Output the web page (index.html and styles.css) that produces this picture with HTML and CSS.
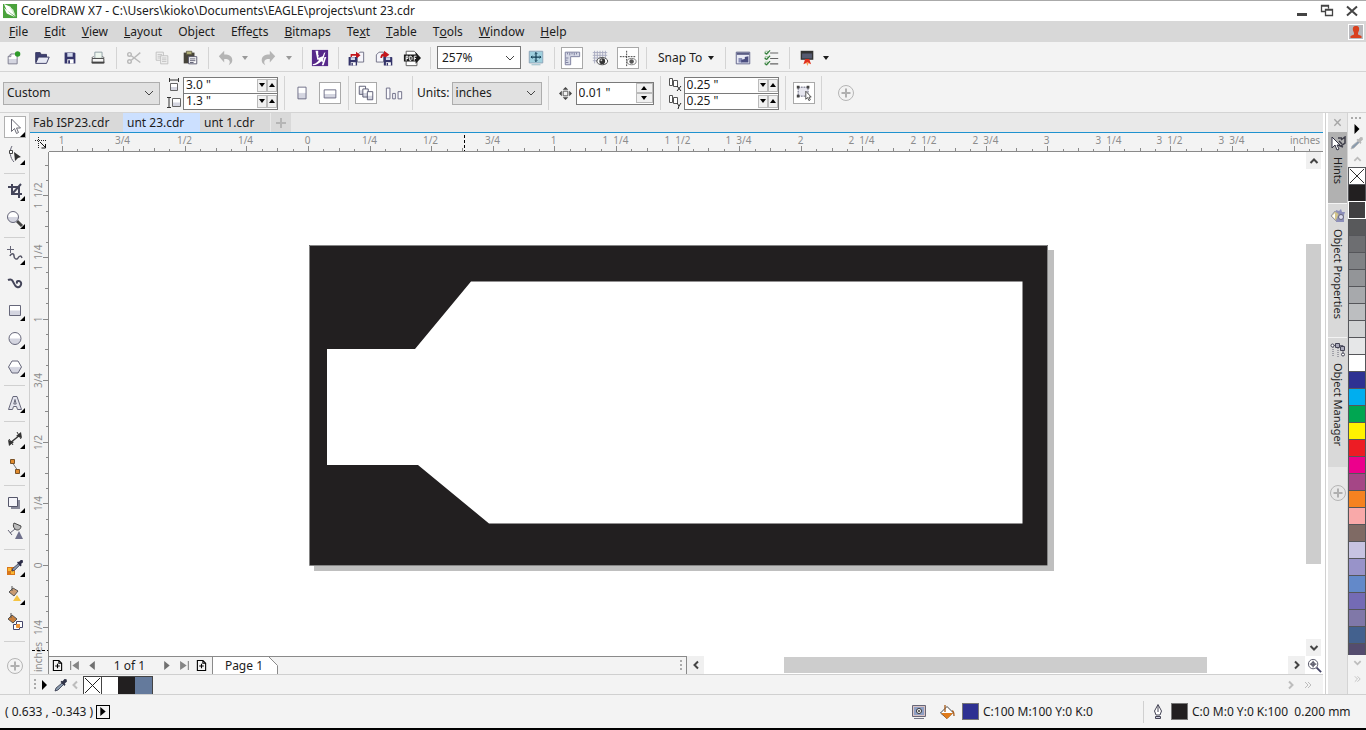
FILE: index.html
```html
<!DOCTYPE html>
<html lang="en">
<head>
<meta charset="utf-8">
<title>CorelDRAW X7 - C:\Users\kioko\Documents\EAGLE\projects\unt 23.cdr</title>
<link rel="stylesheet" href="styles.css">
</head>
<body>
<svg class="defs" aria-hidden="true">
  <defs>
    <linearGradient id="shade" x1="0" y1="0" x2="0" y2="1"><stop offset=".45" stop-color="#fff"/><stop offset=".55" stop-color="#d4d5e0"/></linearGradient>
    <symbol id="fly" viewBox="0 0 22 22"><path d="M21 16v5h-5z" fill="#000"/></symbol>
    <symbol id="chev" viewBox="0 0 10 10"><path d="M1 3l4 4 4-4" fill="none" stroke="currentColor"/></symbol>
    <symbol id="chev-bold" viewBox="0 0 10 10"><path d="M1.500 3l3.500 3.500L8.500 3" fill="none" stroke="currentColor" stroke-width="2"/></symbol>
    <symbol id="dblchev" viewBox="0 0 10 10"><path d="M2 2l3 3-3 3M5 2l3 3-3 3" fill="none" stroke="currentColor"/></symbol>
    <symbol id="down" viewBox="0 0 6 6"><path d="M0 1h6L3 5z" fill="currentColor"/></symbol>
    <symbol id="up" viewBox="0 0 6 6"><path d="M0 5h6L3 1z" fill="currentColor"/></symbol>
    <symbol id="plus-ring" viewBox="0 0 18 18"><circle cx="9" cy="9" r="7.500" fill="none" stroke="#b5b5b5"/><path d="M9 4.500v9M4.500 9h9" stroke="#b0b0b0" stroke-width="2"/></symbol>
    <symbol id="dropper" viewBox="0 0 14 14"><path d="M1 13l1-3 6-5 1.500 1.500L4 12z" fill="#8a9bad" stroke="currentColor" stroke-width=".8"/><path d="M6.500 4l4 4 1-1.500L10.800 5.500 13 3.500 12.500 1.200 10.500 1 8.500 3.300 7.500 2.800z" fill="currentColor"/></symbol>
    <symbol id="none" viewBox="0 0 17 17"><path d="M0 0h17v17H0z" fill="#fff"/><path d="M1 1l15 15M16 1L1 16" stroke="#222"/></symbol>
    <symbol id="addpage" viewBox="0 0 12 12"><path d="M1.500 .500h6l3 3v8h-9zM7.500 .500v3h3M6 4v5M3.500 6.500h5" fill="none" stroke="#000" stroke-width="1.200"/></symbol>
    <symbol id="disk" viewBox="0 0 14 14"><path d="M1 1h11l1 1v11H1z" fill="#34346a"/><path d="M4 1.500h6v4H4z" fill="#cfd6ea"/><path d="M4 8.500h7V13H4z" fill="#fff"/><path d="M5 9.500h2V13H5z" fill="#34346a"/></symbol>
  </defs>
</svg>
<div class="app">
  <header class="titlebar">
    <svg class="logo" viewBox="0 0 16 16"><path d="M0 0h15v15H0z" fill="#4aa23c"/><path d="M1 0l7 3 5 10L4 7z" fill="#fff"/><path d="M6 2l5 4 3 8z" fill="#d5eed0"/><path d="M1 4l7 6 5 4-9-4z" fill="#fff"/></svg>
    <h1 class="title">CorelDRAW X7 - C:\Users\kioko\Documents\EAGLE\projects\unt 23.cdr</h1>
    <button class="winbtn" aria-label="Minimize"><svg viewBox="0 0 14 14"><path d="M2 9h10v3H2z" fill="#444"/></svg></button>
    <button class="winbtn" aria-label="Restore"><svg viewBox="0 0 14 14"><path d="M5 7.500H1.500v-6h7v3M5.500 5.500h7v6h-7zM1 2h8M5 6h8" fill="none" stroke="#444" stroke-width="1.300"/></svg></button>
    <button class="winbtn" aria-label="Close"><svg viewBox="0 0 14 14"><path d="M2 2.500l10 9M12 2.500l-10 9" stroke="#444" stroke-width="2"/></svg></button>
  </header>
  <nav class="menubar">
    <button><u>F</u>ile</button><button><u>E</u>dit</button><button><u>V</u>iew</button><button><u>L</u>ayout</button><button>Ob<u>j</u>ect</button><button>Effe<u>c</u>ts</button><button><u>B</u>itmaps</button><button>Te<u>x</u>t</button><button><u>T</u>able</button><button>T<u>o</u>ols</button><button><u>W</u>indow</button><button><u>H</u>elp</button>
    <button class="user" aria-label="Account"><svg viewBox="0 0 16 16"><path d="M0 0h16v16H0z" fill="#fff"/><path d="M1 1h14v14H1z" fill="#b9b9bd"/><path d="M8 2c3 0 3.500 2 3 4.500L10 9v1.500l3.500 1.500v2h-11v-2L6 10.500V9L5 6.500C4.500 4 5 2 8 2z" fill="#d9411e"/></svg></button>
  </nav>

  <div class="toolbar">
    <button class="tool" aria-label="New"><svg viewBox="0 0 20 20"><path d="M3.500 8.500l3-3h7v11h-10z" fill="url(#shade)" stroke="#77778a"/><path d="M3.500 8.500h3v-3" fill="none" stroke="#77778a"/><circle cx="14" cy="5.500" r="3" fill="#2e9a2a"/></svg></button>
    <button class="tool" aria-label="Open"><svg viewBox="0 0 20 20"><path d="M3 15V4h5l1 2h6v3" fill="#3d3f70" stroke="#34365e"/><path d="M3 16l3-7h12l-3 7z" fill="#e7e9f4" stroke="#34365e"/></svg></button>
    <button class="tool" aria-label="Save"><svg viewBox="0 0 20 20"><use href="#disk" x="3" y="3" width="14" height="14"/></svg></button>
    <button class="tool" aria-label="Print"><svg viewBox="0 0 20 20"><path d="M6.500 10V3.500h8V10" fill="#eef6ee" stroke="#8a9aa0"/><path d="M3 10l2-2M17 10l-2-2" stroke="#555"/><path d="M3.500 10.500h13v5h-13z" fill="#f6f6f6" stroke="#333"/><path d="M3 14h14v2H3z" fill="#444"/></svg></button>
    <span class="sep"></span>
    <button class="tool" aria-label="Cut"><svg viewBox="0 0 20 20" fill="none" stroke="#b9b9b9" stroke-width="1.600"><path d="M17 4L7 12.500M17 15L7 7.500"/><circle cx="5" cy="6" r="2"/><circle cx="5" cy="14" r="2"/></svg></button>
    <button class="tool" aria-label="Copy"><svg viewBox="0 0 20 20" fill="#f3f3f3" stroke="#bdbdbd"><path d="M3.500 3.500h8v9h-8zM5 6h5M5 8h5M5 10h5"/><path d="M8.500 7.500h8v9h-8zM10 10h5M10 12h5M10 14h5"/></svg></button>
    <button class="tool" aria-label="Paste"><svg viewBox="0 0 20 20"><path d="M3 4h12v12H3z" fill="#46433a"/><path d="M6 2.500h6V6H6z" fill="#b3b17a" stroke="#55523c" stroke-width=".8"/><path d="M8.500 8.500h9v8h-9z" fill="#fff" stroke="#55556a"/><path d="M10 11h6M10 13h6M10 15h4" stroke="#55556a"/></svg></button>
    <span class="sep"></span>
    <button class="tool" aria-label="Undo"><svg viewBox="0 0 20 20"><path d="M2 8l6-6v4c6 0 9 2 9 6.500 0 2-1 4-4 5.500 1-2 1.500-3 1-4.500-.500-2-2-2.500-6-2.500v4z" fill="#b5b5b5"/></svg></button>
    <button class="drop dim" aria-label="Undo history"><svg><use href="#down"/></svg></button>
    <button class="tool shifted" aria-label="Redo"><svg viewBox="0 0 20 20"><path d="M18 8l-6-6v4c-6 0-9 2-9 6.500 0 2 1 4 4 5.500-1-2-1.500-3-1-4.500.500-2 2-2.500 6-2.500v4z" fill="#b5b5b5"/></svg></button>
    <button class="drop dim" aria-label="Redo history"><svg><use href="#down"/></svg></button>
    <span class="sep wide"></span>
    <button class="tool" aria-label="Search content"><svg viewBox="0 0 20 20"><path d="M1 1h18v18H1z" fill="#57298a"/><path d="M5 2h3L8 7l8-3.500-2 6.500L7 12z" fill="#fff"/><path d="M9 5.500L15 3l-2 5-5 2z" fill="#57298a"/><path d="M2 17c4-1 6-3 7-5l-2-1 7-2-1 6-1.500-1.500C9 16 6 18 2 18z" fill="#fff"/><path d="M15 9h2l-3 9h-2z" fill="#fff"/></svg></button>
    <span class="sep"></span>
    <button class="tool" aria-label="Import"><svg viewBox="0 0 20 20"><path d="M11.500 6.500l3-3h4v11h-7z" fill="#f5f5fb" stroke="#6a6a80"/><path d="M4 5.500h6V3l5 4-5 4V7.500H5.500V10H4z" fill="#c4161c"/><use href="#disk" x="1" y="8" width="11" height="11"/></svg></button>
    <button class="tool" aria-label="Export"><svg viewBox="0 0 20 20"><path d="M1.500 6.500l3-3h5v11h-8z" fill="#f5f5fb" stroke="#6a6a80"/><path d="M6 10c0-3 1-5 4-5V2l6 4.500-6 4V8C8 8 8 8.500 8 10z" fill="#c4161c"/><use href="#disk" x="9" y="8" width="11" height="11"/></svg></button>
    <button class="tool" aria-label="Publish to PDF"><svg viewBox="0 0 20 20"><path d="M3.500 18.500v-16h9l3 3v13z" fill="#fff" stroke="#555"/><path d="M1 6h13V3.500l6 6.500-6 6.500V14H1z" fill="#1b1b1b"/><path d="M3.500 13V8h2v2.500h-2M7.500 8v4.500H9l1-1V9L9 8zM12.500 13V8h2.500M12.500 10.500h2" fill="none" stroke="#fff" stroke-width="1.100"/></svg></button>
    <span class="sep"></span>
    <label class="combo zoom"><select aria-label="Zoom level"><option>257%</option></select><svg><use href="#chev"/></svg></label>
    <button class="tool" aria-label="Full-screen preview"><svg viewBox="0 0 20 20"><path d="M2.500 2.500h15v13h-15z" fill="#9fd0de" stroke="#8aa0b5"/><path d="M5 17.500h10" stroke="#8ab7c5"/><path d="M10 4v10M4.500 9h11" stroke="#123c52" stroke-width="1.300"/><path d="M8.500 5.500L10 4l1.500 1.500M8.500 12.500L10 14l1.500-1.500M6 7.500L4.500 9 6 10.500M14 7.500L15.500 9 14 10.500" fill="none" stroke="#123c52"/></svg></button>
    <span class="sep"></span>
    <button class="tool on" aria-label="Show rulers"><svg viewBox="0 0 20 20"><path d="M2.500 3.500h16v5h-10v9h-6z" fill="#d5d8e6" stroke="#777b9a"/><path d="M5 4v2M7.500 4v3M10 4v2M12.500 4v3M15 4v2M3 10h3M3 12.500h2M3 15h3" stroke="#777b9a"/></svg></button>
    <button class="tool" aria-label="Show grid"><svg viewBox="0 0 20 20"><path d="M4 2v14M7 2v14M10 2v8M13 2v8M16 2v8M2 4h16M2 7h16M2 10h10M2 13h6" stroke="#a5a8bd"/><ellipse cx="12.500" cy="13.500" rx="6" ry="4" fill="#fff" stroke="#333"/><circle cx="12.500" cy="13.500" r="3.200" fill="#333"/><circle cx="11.500" cy="12.500" r="1" fill="#ccc"/></svg></button>
    <button class="tool on" aria-label="Show guidelines"><svg viewBox="0 0 20 20"><path d="M8.500 2v17M1 8.500h18" stroke="#333" stroke-dasharray="2 1"/><ellipse cx="14" cy="14" rx="5" ry="3.500" fill="#fff" stroke="#777"/><circle cx="14" cy="14" r="2.500" fill="#555"/></svg></button>
    <span class="sep"></span>
    <button class="snap">Snap To <svg><use href="#down"/></svg></button>
    <span class="sep"></span>
    <button class="tool" aria-label="Welcome screen"><svg viewBox="0 0 20 20"><path d="M2.500 3.500h15v13h-15z" fill="#e8eaf5" stroke="#5a5d85"/><path d="M3 4h14v2.500H3z" fill="#5a5d85"/><path d="M5 10h4v5H5z" fill="#8a8fb8"/><path d="M8 12l4-1V9l4-1v7H8z" fill="#4a4d80"/></svg></button>
    <button class="tool" aria-label="Options"><svg viewBox="0 0 20 20"><path d="M9 4.500h9M9 10.500h9M9 16.500h9" stroke="#666" stroke-width="1.200"/><path d="M3.500 2.500h3v3h-3zM3.500 8.500h3v3h-3zM3.500 14.500h3v3h-3z" fill="none" stroke="#9bbf9b"/><path d="M3 4l2 1.500 4-4M3 10l2 1.500 4-4M3 16l2 1.500 4-4" fill="none" stroke="#2c7a35" stroke-width="1.200"/></svg></button>
    <span class="sep"></span>
    <button class="tool" aria-label="Application launcher"><svg viewBox="0 0 20 20"><path d="M3 2h14v10H3z" fill="#333"/><path d="M4.500 5h11v5.500h-11z" fill="#555a70"/><path d="M6 17l2-6h4.500l2 6-4-2z" fill="#e0301e"/><path d="M9 15l1.500 4 1.500-4z" fill="#f6a04d"/></svg></button>
    <button class="drop" aria-label="Launcher menu"><svg><use href="#down"/></svg></button>
  </div>

  <div class="toolbar props">
    <label class="combo gray preset"><select aria-label="Page size"><option>Custom</option></select><svg><use href="#chev"/></svg></label>
    <div class="pair">
      <svg viewBox="0 0 14 16"><path d="M3.500 6.500h7v7h-7z" fill="url(#shade)" stroke="#666"/><path d="M2.500 1v4M11.500 1v4M2.500 3h9" stroke="#333"/></svg>
      <div class="spin"><input aria-label="Page width" value="3.0 &quot;"><button aria-label="Less"><svg><use href="#down"/></svg></button><button aria-label="More"><svg><use href="#up"/></svg></button></div>
      <svg viewBox="0 0 14 16"><path d="M5.500 4.500h8v8h-8z" fill="url(#shade)" stroke="#666"/><path d="M0 3.500h4M0 13.500h4M2 4v9" stroke="#333"/></svg>
      <div class="spin"><input aria-label="Page height" value="1.3 &quot;"><button aria-label="Less"><svg><use href="#down"/></svg></button><button aria-label="More"><svg><use href="#up"/></svg></button></div>
    </div>
    <span class="sep after"></span>
    <button class="tool" aria-label="Portrait"><svg viewBox="0 0 20 20"><path d="M5.500 3.500h9v13h-9z" fill="url(#shade)" stroke="#666780"/></svg></button>
    <button class="tool on" aria-label="Landscape"><svg viewBox="0 0 20 20"><path d="M3.500 6.500h13v9h-13z" fill="url(#shade)" stroke="#666780"/></svg></button>
    <span class="sep"></span>
    <button class="tool on" aria-label="All pages"><svg viewBox="0 0 20 20" fill="url(#shade)" stroke="#55566e"><path d="M2.500 2.500h7v9h-7z"/><path d="M6.500 5.500h6v9h-6z"/><path d="M11.500 8.500h6v9h-6z"/></svg></button>
    <button class="tool" aria-label="Current page"><svg viewBox="0 0 20 20" fill="#fafafe" stroke="#666780"><path d="M1.500 4.500h4v12h-4zM8.500 10.500h3v6h-3zM14.500 8.500h4v8h-4z"/></svg></button>
    <span class="sep"></span>
    <label class="units"><span>Units:</span><span class="combo gray"><select aria-label="Units"><option>inches</option></select><svg><use href="#chev"/></svg></span></label>
    <span class="sep tail"></span>
    <svg class="nudge-icon" viewBox="0 0 14 14"><path d="M4.500 4.500h5v5h-5z" fill="none" stroke="#555"/><path d="M4 3h6L7 0zM4 11h6l-3 3zM3 4v6L0 7zM11 4v6l3-3z" fill="#444"/></svg>
    <div class="spin nudge"><input aria-label="Nudge distance" value="0.01 &quot;"><span class="stack"><button aria-label="More"><svg><use href="#up"/></svg></button><button aria-label="Less"><svg><use href="#down"/></svg></button></span></div>
    <span class="sep tail"></span>
    <div class="pair dup">
      <svg viewBox="0 0 14 16"><path d="M1.500 1.500h3v7h-3zM5.500 3.500h4v6h-4z" fill="#fff" stroke="#555"/><path d="M9 9l4 5M13 9l-4 5" stroke="#222"/></svg>
      <div class="spin"><input aria-label="Duplicate distance X" value="0.25 &quot;"><button aria-label="Less"><svg><use href="#down"/></svg></button><button aria-label="More"><svg><use href="#up"/></svg></button></div>
      <svg viewBox="0 0 14 16"><path d="M1.500 1.500h3v7h-3zM5.500 3.500h4v6h-4z" fill="#fff" stroke="#555"/><path d="M9 9l2 3 2-3M11 12l-1 3" stroke="#222" fill="none"/></svg>
      <div class="spin"><input aria-label="Duplicate distance Y" value="0.25 &quot;"><button aria-label="Less"><svg><use href="#down"/></svg></button><button aria-label="More"><svg><use href="#up"/></svg></button></div>
    </div>
    <span class="sep tail"></span>
    <button class="tool on" aria-label="Treat as filled"><svg viewBox="0 0 20 20"><path d="M3.500 3.500h11v10h-11z" fill="#e6e6ef" stroke="#55566e" stroke-dasharray="2 1"/><path d="M2 2h3v3H2zM13 2h3v3h-3zM2 12h3v3H2z" fill="#444"/><path d="M12 8v9l2-2 1.500 3.500 1.500-1-1.500-3H18z" fill="#fff" stroke="#444"/></svg></button>
    <span class="sep"></span>
    <button class="tool add" aria-label="Customize"><svg><use href="#plus-ring"/></svg></button>
  </div>

  <main class="main">
    <div class="toolbox">
      <button class="on" aria-label="Pick"><svg viewBox="0 0 22 22"><path d="M7.500 3v12.500l3-3 2 5 2-1-2-4.500h4z" fill="#fff" stroke="#6a6a75"/><use href="#fly"/></svg></button>
      <button aria-label="Shape"><svg viewBox="0 0 22 22"><path d="M8 2C5 7 6 14 10 18" fill="none" stroke="#667"/><path d="M5.500 6.500h3v3h-3z" fill="#fff" stroke="#444"/><path d="M10 8l7 5-3 1-3 3z" fill="#333"/><use href="#fly"/></svg></button>
      <span class="hsep"></span>
      <button aria-label="Crop"><svg viewBox="0 0 22 22"><path d="M4 7h11v11M8 4v10h10M8 14L17 4" fill="none" stroke="#44455a" stroke-width="2"/><use href="#fly"/></svg></button>
      <button aria-label="Zoom"><svg viewBox="0 0 22 22"><path d="M13 13l5 5" stroke="#444" stroke-width="3"/><circle cx="9" cy="9" r="5.500" fill="url(#shade)" stroke="#66677a"/><use href="#fly"/></svg></button>
      <span class="hsep"></span>
      <button aria-label="Freehand"><svg viewBox="0 0 22 22"><path d="M6.500 2v7M3 5.500h7" stroke="#667"/><path d="M6 12c1-3 4-3 4 0s3 4 4 2 3-3 4 0" fill="none" stroke="#556" stroke-width="1.500"/><use href="#fly"/></svg></button>
      <button aria-label="Artistic media"><svg viewBox="0 0 22 22"><path d="M4 8c6-3 5 6 9 7s6-5 2-6c-2-.500-3 1-1.500 2.500" fill="none" stroke="#44455a" stroke-width="2"/></svg></button>
      <button aria-label="Rectangle"><svg viewBox="0 0 22 22"><path d="M5.500 5.500h11v10h-11z" fill="url(#shade)" stroke="#66677a"/><use href="#fly"/></svg></button>
      <button aria-label="Ellipse"><svg viewBox="0 0 22 22"><circle cx="11" cy="10.500" r="6" fill="url(#shade)" stroke="#66677a"/><use href="#fly"/></svg></button>
      <button aria-label="Polygon"><svg viewBox="0 0 22 22"><path d="M4.500 11l3.500-6h6l3.500 6-3.500 6H8z" fill="url(#shade)" stroke="#66677a"/><use href="#fly"/></svg></button>
      <span class="hsep"></span>
      <button aria-label="Text"><svg viewBox="0 0 22 22"><path d="M9 4.500h4l4.500 13h-4l-1-3h-3l-1 3h-4zM11 7.500l-1.200 4.500h2.400z" fill="#e4e5ee" stroke="#66677a"/><use href="#fly"/></svg></button>
      <span class="hsep"></span>
      <button aria-label="Dimension"><svg viewBox="0 0 22 22"><path d="M6 15l10-8" stroke="#333" stroke-width="1.500"/><path d="M4 12l6 2-5 4zM18 10l-6-2 5-4z" fill="#333"/><path d="M5 11l4 6M13 4l4 7" stroke="#333"/><use href="#fly"/></svg></button>
      <button aria-label="Connector"><svg viewBox="0 0 22 22"><path d="M8 6l6 9" stroke="#777"/><path d="M6.500 3.500h4v4h-4zM11.500 13.500h4v4h-4z" fill="#e08a2c" stroke="#7a5328"/><use href="#fly"/></svg></button>
      <span class="hsep"></span>
      <button aria-label="Drop shadow"><svg viewBox="0 0 22 22"><path d="M7 8h9v9H7z" fill="#8a8b9c"/><path d="M4.500 5.500h9v9h-9z" fill="#f5f5fa" stroke="#55566a"/><use href="#fly"/></svg></button>
      <button aria-label="Transparency"><svg viewBox="0 0 22 22"><path d="M10 3l7 3c0 4-4 5-6 3s-2-4-1-6z" fill="#bbb" stroke="#444"/><path d="M11 9l-5 4M4 10l4 5" stroke="#667"/><path d="M15 11l4 8h-8z" fill="#70718c"/></svg></button>
      <span class="hsep"></span>
      <button aria-label="Eyedropper"><svg viewBox="0 0 22 22"><path d="M3 11h8v8H3z" fill="#d9761a"/><path d="M4 12h3v3H4zM7 15h3v3H7z" fill="#f7b733"/><use href="#dropper" x="7" y="3" width="13" height="13" color="#2c2d48"/><use href="#fly"/></svg></button>
      <button aria-label="Interactive fill"><svg viewBox="0 0 22 22"><path d="M5 8l4-4 5 3-4 5z" fill="#c99b72" stroke="#555"/><path d="M8 2v5" stroke="#555"/><path d="M13 11l4 6H9z" fill="#f5c443"/><use href="#fly"/></svg></button>
      <button aria-label="Smart fill"><svg viewBox="0 0 22 22"><path d="M4 7l4-4 5 4-4 4z" fill="#c9803c" stroke="#555"/><path d="M7 1v5" stroke="#555"/><path d="M12.500 9.500h6v6h-6z" fill="#fff" stroke="#44456a"/><path d="M9.500 12.500h6v5h-6z" fill="#fff" stroke="#44456a"/><path d="M12.500 12.500h3v3h-3z" fill="#f0963a" stroke="#f0963a"/></svg></button>
      <span class="hsep"></span>
      <button class="add" aria-label="Customize toolbox"><svg><use href="#plus-ring"/></svg></button>
    </div>

    <section class="doc">
      <div class="tabs">
        <button>Fab ISP23.cdr</button><button class="active">unt 23.cdr</button><button>unt 1.cdr</button><button class="newtab" aria-label="New document"><svg viewBox="0 0 12 12"><path d="M6 1v10M1 6h10" stroke="#b5b5b5" stroke-width="2"/></svg></button>
      </div>
      <div class="workspace">
        <div class="origin"><svg viewBox="0 0 12 12"><path d="M3.500 0v12M0 3.500h12" stroke="#222" stroke-dasharray="1 1"/><path d="M5 5l5 5M10.500 7v4H6.500" fill="none" stroke="#111"/></svg></div>
        <svg class="hruler" id="hruler"></svg>
        <svg class="vruler" id="vruler"></svg>
        <div class="view">
          <svg class="canvas" role="img" aria-label="Drawing page">
            <path d="M265 98h740v321H265z" fill="#bfbfbf"/>
            <path d="M260 93h739v321H260z" fill="#fff"/>
            <path d="M260 93h739v320H260z" fill="#221f20"/>
            <path d="M260.500 413.500V93.500h738v320z" fill="none" stroke="#858585"/>
            <path d="M422 129.500h551.500v242H440L369 313H278V197h88z" fill="#fff"/>
          </svg>
          <div class="vscroll">
            <button class="flip" aria-label="Scroll up"><svg><use href="#chev-bold"/></svg></button>
            <span class="track"><span class="thumb"></span></span>
            <button aria-label="Scroll down"><svg><use href="#chev-bold"/></svg></button>
          </div>
        </div>
        <div class="pagebar">
          <div class="pages">
            <button aria-label="Add page before"><svg viewBox="0 0 12 12"><use href="#addpage"/></svg></button>
            <button aria-label="First page"><svg viewBox="0 0 10 10"><path d="M1 1h1v8H1zM9 1v8L3 5z" fill="#858585"/></svg></button>
            <button aria-label="Previous page"><svg viewBox="0 0 10 10"><path d="M8 1v8L3 5z" fill="#707070"/></svg></button>
            <span class="count">1 of 1</span>
            <button aria-label="Next page"><svg viewBox="0 0 10 10"><path d="M2 1v8l5-4z" fill="#707070"/></svg></button>
            <button aria-label="Last page"><svg viewBox="0 0 10 10"><path d="M9 1H8v8h1zM1 1v8l6-4z" fill="#858585"/></svg></button>
            <button aria-label="Add page after"><svg viewBox="0 0 12 12"><use href="#addpage"/></svg></button>
            <button class="pagetab"><span>Page 1</span><svg viewBox="0 0 9 17"><path d="M0 0h9v17H0z" fill="#f3f3f3"/><path d="M0 0l8.500 8.500V17H0z" fill="#fff"/><path d="M0 0l8.500 8.500V17" fill="none" stroke="#8a8a8a"/></svg></button>
            <span class="grip"></span>
          </div>
          <button class="left" aria-label="Scroll left"><svg><use href="#chev-bold"/></svg></button>
          <span class="htrack"><span class="thumb"></span></span>
          <button class="right" aria-label="Scroll right"><svg><use href="#chev-bold"/></svg></button>
          <button class="navigator" aria-label="Navigator"><svg viewBox="0 0 16 16"><path d="M10 10l5 5" stroke="#446" stroke-width="2"/><circle cx="6.500" cy="6.500" r="5" fill="#fff" stroke="#556"/><path d="M6.500 3v7M3 6.500h7" stroke="#334"/><circle cx="6.500" cy="6.500" r="2" fill="none" stroke="#556"/></svg></button>
        </div>
      </div>
      <div class="docpalette">
        <span class="grip"></span>
        <button aria-label="Palette menu"><svg viewBox="0 0 6 10"><path d="M0 0v10l5-5z"/></svg></button>
        <button aria-label="Eyedropper"><svg viewBox="0 0 14 14" color="#303448"><use href="#dropper"/></svg></button>
        <button class="left pale" aria-label="Previous colors"><svg><use href="#chev-bold"/></svg></button>
        <div class="chips"><button aria-label="No color"><svg><use href="#none"/></svg></button><button class="c-white" aria-label="White"></button><button class="c-black" aria-label="Black"></button><button class="c-steel" aria-label="Steel blue"></button></div>
        <button class="right pale end" aria-label="Next colors"><svg><use href="#chev-bold"/></svg></button>
        <button class="pale" aria-label="Expand"><svg><use href="#dblchev"/></svg></button>
      </div>
    </section>

    <div class="splitter"></div>
    <aside class="docker">
      <button class="close" aria-label="Close docker"><svg viewBox="0 0 10 10"><path d="M1.500 1.500l7 7M8.500 1.500l-7 7" stroke="#a5a5a5" stroke-width="1.500"/></svg></button>
      <button class="dock hints"><svg viewBox="0 0 16 16"><path d="M8 2h4M11 4l4-3v6l-4 3M9 5l3 3M8 9l5 2" fill="none" stroke="#3c3c48" stroke-width="1.500"/><path d="M2 1v11l3-3 2 5 2-1-2-4h3z" fill="#fff" stroke="#334"/></svg><span>Hints</span></button>
      <button class="dock objprops"><svg viewBox="0 0 16 16"><path d="M6 2l3 1 2-2 1 3h3l-1 3v7H6z" fill="#8d8fba"/><path d="M1 8l4-5 4 3-3 7z" fill="#d3c48a" stroke="#99a"/><path d="M2 8l3-3v6z" fill="#fff"/><circle cx="11" cy="9" r="2.500" fill="#dcdcf0" stroke="#667"/></svg><span>Object Properties</span></button>
      <button class="dock objman"><svg viewBox="0 0 16 16"><path d="M3 5v10M8 6v9" fill="none" stroke="#667" stroke-dasharray="1 1"/><path d="M3 3.500h10v8" fill="none" stroke="#667"/><path d="M5.500 1.500h4v4h-4zM10.500 4.500h4v4h-4z" fill="#aab" stroke="#445"/><circle cx="2.500" cy="3.500" r="1.500" fill="#fff" stroke="#445"/><circle cx="13" cy="12.500" r="1.500" fill="#fff" stroke="#445"/></svg><span>Object Manager</span></button>
      <button class="add" aria-label="Add docker"><svg><use href="#plus-ring"/></svg></button>
    </aside>
    <aside class="palette">
      <span class="dots"></span>
      <button class="pmenu" aria-label="Palette menu"><svg viewBox="0 0 6 10"><path d="M0 0v10l5-5z"/></svg></button>
      <button class="pdrop" aria-label="Eyedropper"><svg viewBox="0 0 14 14" color="#b9b9b9"><use href="#dropper"/></svg></button>
      <button class="flip pale" aria-label="Palette up"><svg><use href="#chev-bold"/></svg></button>
      <div class="swatches" id="swatches"></div>
      <button class="pale" aria-label="Palette down"><svg><use href="#chev-bold"/></svg></button>
      <button class="pale" aria-label="Expand palette"><svg><use href="#dblchev"/></svg></button>
    </aside>
  </main>

  <footer class="status">
    <span class="coords">( 0.633 , -0.343 )</span>
    <button class="play" aria-label="Status options"><svg viewBox="0 0 6 10"><path d="M0 0v10l6-5z"/></svg></button>
    <svg class="proof" viewBox="0 0 16 16"><path d="M1.500 1.500h13v11h-13z" fill="#d9c3c3" stroke="#667"/><path d="M3 3h10v8H3z" fill="#8fa0c5"/><circle cx="8" cy="7" r="2.500" fill="#fff" stroke="#333"/><circle cx="8" cy="7" r="1" fill="#333"/><path d="M3 14.500h10" stroke="#778"/></svg>
    <svg class="bucket" viewBox="0 0 16 16"><path d="M1.500 9L8 2.500l6 6L8 14.500z" fill="#fff" stroke="#444"/><path d="M2 9h12l-6 6z" fill="#e07b1a"/><path d="M6 1v7M13 7c2 0 2 2 2 5" fill="none" stroke="#a55a1a" stroke-width="1.300"/></svg>
    <span class="sw blue"></span>
    <span class="fillval">C:100 M:100 Y:0 K:0</span>
    <span class="ssep"></span>
    <svg class="pen" viewBox="0 0 12 16"><path d="M6 .500L9.500 7 8 11H4L2.500 7z" fill="#fff" stroke="#445"/><path d="M6 2v6" stroke="#445"/><path d="M3.500 12.500h5v2h-5z" fill="#ccd" stroke="#445"/></svg>
    <span class="sw ink"></span>
    <span class="outval">C:0 M:0 Y:0 K:100&nbsp; 0.200 mm</span>
  </footer>
  <div class="edge"></div>
</div>
<script src="main.js"></script>
</body>
</html>
```
FILE: styles.css
```css
* { box-sizing: border-box; }
body { margin: 0; font: 12px/16px "Noto Sans", "Open Sans", sans-serif; color: #1c1c1c; background: #f3f3f3; }
button, input, select { font: inherit; color: inherit; margin: 0; padding: 0; border: 0; background: none; border-radius: 0; }
button { display: flex; align-items: center; justify-content: center; flex: none; }
svg { display: block; flex: none; }
.defs { position: absolute; width: 0; height: 0; }
.app { height: 100vh; display: flex; flex-direction: column; border-top: 1px solid #aaa; overflow: hidden; }

.titlebar { display: flex; align-items: center; height: 20px; flex: none; background: #fff; padding: 0 2px 0 3px; }
.logo { width: 15px; height: 15px; }
.title { font-size: 12px; font-weight: 400; line-height: 16px; margin: 0 auto 0 3px; white-space: nowrap; }
.winbtn { width: 25px; height: 20px; }
.winbtn svg { width: 14px; height: 14px; }

.menubar { display: flex; align-items: center; height: 21px; flex: none; background: #d8d8d8; gap: 16px; padding: 1px 2px 0 9px; }
.menubar .user { margin-left: auto; }
.user svg { width: 16px; height: 16px; }

.toolbar { display: flex; align-items: center; height: 30px; flex: none; background: #f3f3f3; border-bottom: 1px solid #d4d4d4; padding-top: 2px; }
.toolbar .tool { width: 28px; height: 24px; }
.tool svg { width: 18px; height: 18px; }
.tool.on svg { width: 22px; height: 22px; border: 1px solid #a9a9a9; background: #fff; padding: 1px; }
.sep { width: 8px; height: 22px; flex: none; background: linear-gradient(#d4d4d4, #d4d4d4) center / 1px 100% no-repeat; }
.sep.wide { margin-left: 4px; }
.drop { width: 10px; }
.drop svg, .snap svg { width: 6px; height: 6px; }
.dim { color: #999; }
.shifted { margin: 0 2px 0 4px; }
.snap { gap: 6px; padding: 0 7px 0 8px; }

.combo { display: grid; grid-template-columns: 1fr 20px; align-items: center; height: 23px; border: 1px solid #7a7a7a; background: #fff; }
.combo.gray { background: #e1e1e1; border-color: #adadad; }
.combo select { appearance: none; grid-area: 1 / 1 / 2 / 3; height: 21px; padding: 0 4px; outline: 0; width: 100%; }
.combo.gray select { padding: 0 3px; }
.combo svg { grid-area: 1 / 2; width: 10px; height: 10px; color: #444; pointer-events: none; justify-self: center; }
.zoom { width: 84px; margin: 0 1px 0 3px; }

.props { height: 41px; padding-left: 3px; }
.props .sep { height: 34px; }
.props .sep.tail { margin-left: 3px; }
.props .sep.after { margin-left: 2px; }
.preset { width: 157px; margin-right: 7px; }
.pair { display: grid; grid-template-columns: 14px 95px; column-gap: 2px; align-items: center; }
.pair.dup { margin-left: 3px; }
.pair > svg { width: 14px; height: 16px; }
.spin { display: flex; align-items: center; height: 17px; border: 1px solid #7a7a7a; background: #fff; }
.pair .spin:last-child { margin-top: -1px; }
.spin input { flex: 1; min-width: 0; padding-left: 2px; height: 15px; outline: 0; }
.spin button { width: 10px; height: 13px; border: 1px solid #bbb; background: #f0f0f0; }
.spin svg { width: 6px; height: 6px; color: #000; }
.units { display: flex; align-items: center; gap: 2px; padding-left: 1px; }
.units .combo { width: 90px; }
.nudge-icon { width: 13px; height: 13px; margin: 0 4px 0 6px; }
.spin.nudge { width: 78px; height: 23px; }
.nudge .stack { display: flex; flex-direction: column; }
.nudge .stack button { width: 17px; height: 10px; }
.add svg { width: 18px; height: 18px; }
.toolbar .add { margin-left: 6px; }

.main { flex: 1; min-height: 0; display: flex; }
.toolbox { width: 30px; flex: none; border-right: 1px solid #cfcfcf; display: flex; flex-direction: column; }
.toolbox button { height: 28px; }
.toolbox svg { width: 22px; height: 22px; }
.toolbox .on svg { outline: 1px solid #b0b0b0; outline-offset: -1px; background: #fff; }
.toolbox .add { margin-top: 7px; }
.toolbox .add svg { width: 18px; height: 18px; }
.hsep { height: 8px; margin: 0 4px; background: linear-gradient(#d0d0d0, #d0d0d0) center / 100% 1px no-repeat; flex: none; }

.doc { flex: 1; min-width: 0; display: flex; flex-direction: column; }
.tabs { display: flex; height: 20px; flex: none; background: #e9e9e9; border-bottom: 1px solid #1f92cf; }
.tabs button { width: 70px; background: #d9d9d9; justify-content: flex-start; padding-left: 4px; white-space: nowrap; }
.tabs button:first-child { width: 93px; padding-left: 3px; }
.tabs .active { width: 77px; background: #cce0ff; }
.tabs .newtab { width: 20px; margin-left: 1px; padding: 0; justify-content: center; }
.newtab svg { width: 12px; height: 12px; }

.workspace { flex: 1; min-height: 0; display: grid; grid-template: 19px 1fr 18px / 19px 1fr; }
.origin { display: grid; place-items: center; padding-left: 2px; }
.origin svg { width: 12px; height: 12px; }
.hruler { width: 100%; height: 19px; border-bottom: 1px solid #8a8a8a; }
.vruler { grid-row: 2 / 4; width: 19px; height: 100%; border-right: 1px solid #8a8a8a; }
.tick { stroke: #8a8a8a; }
.mark { stroke: #000; stroke-dasharray: 3 2; }
.rlabel { font-size: 10px; fill: #8c8c8c; text-anchor: middle; white-space: pre; }
.view { display: grid; grid-template-columns: 1fr 17px; background: #fff; min-height: 0; }
.canvas { width: 100%; height: 100%; min-height: 0; }
.vscroll { display: flex; flex-direction: column; padding-right: 2px; min-height: 0; }
.vscroll button { height: 17px; background: #f0f0f0; color: #444; }
.vscroll svg, .pagebar > button svg { width: 10px; height: 10px; }
.track { flex: 1; display: grid; grid-template-rows: 75fr 320fr 75fr; }
.track .thumb { grid-row: 2; background: #cdcdcd; }
.flip svg { transform: rotate(180deg); }
.left svg { transform: rotate(90deg); }
.right svg { transform: rotate(-90deg); }
.pagebar { display: grid; grid-template-columns: 638px 17px 1fr 17px 18px; background: #fff; color: #444; min-width: 0; }
.pages { display: flex; align-items: center; color: #1c1c1c; background: #f3f3f3; border: solid #8a8a8a; border-width: 1px 1px 0 0; }
.pages button { width: 17px; }
.pages button svg { width: 11px; height: 11px; }
.count { width: 59px; text-align: center; }
.pages .pagetab { width: 66px; height: 17px; margin-left: 2px; background: #fff; border-left: 1px solid #8a8a8a; }
.pagetab span { flex: 1; text-align: right; padding-right: 6px; }
.pages .pagetab svg { width: 9px; height: 17px; }
.grip { width: 2px; height: 12px; background: repeating-linear-gradient(#aaa 0 2px, transparent 2px 4px); }
.pages .grip { margin: 0 4px 0 auto; }
.pagebar > .left, .pagebar > .right { background: #f0f0f0; }
.htrack { display: grid; grid-template-columns: 80fr 423fr 81fr; padding: 1px 0; }
.htrack .thumb { grid-column: 2; background: #cdcdcd; }
.pagebar > .navigator svg { width: 15px; height: 15px; }

.docpalette { display: flex; align-items: center; height: 20px; flex: none; border-top: 1px solid #cfcfcf; padding: 0 7px 0 4px; }
.docpalette button { width: 17px; height: 17px; }
.docpalette > button svg { width: 10px; height: 10px; }
.docpalette > button:nth-of-type(2) { width: 15px; }
.docpalette > button:nth-of-type(2) svg { width: 14px; height: 14px; }
.docpalette > button:nth-of-type(3) { width: 13px; }
.pale { color: #bdbdbd; }
.docpalette .end { margin-left: auto; }
.chips { display: flex; border: 1px solid #444; height: 18px; margin-left: 2px; }
.docpalette .chips svg { width: 17px; height: 17px; }
.c-white { background: #fff; }
.docpalette .c-white { border-left: 1px solid #444; }
.c-black { background: #221f20; }
.c-steel { background: #647a9c; }

.splitter { width: 5px; flex: none; background: #fff; border-left: 1px solid #fff; box-shadow: inset 1px 0 #fff, inset 2px 0 #d0d0d0; }
.docker { width: 20px; flex: none; background: #e8e8e8; border-right: 1px solid #d4d4d4; display: flex; flex-direction: column; }
.docker .close { height: 19px; }
.close svg { width: 9px; height: 9px; }
.dock { background: #d9d9d9; border-bottom: 1px solid #f3f3f3; flex-direction: column; justify-content: flex-start; gap: 5px; padding-top: 4px; font-size: 11px; }
.dock svg { width: 16px; height: 16px; }
.dock span { writing-mode: vertical-rl; white-space: nowrap; line-height: 18px; }
.dock.hints { height: 72px; background: #b1b1b1; }
.dock.objprops { height: 134px; }
.dock.objman { height: 129px; border-bottom: 0; }
.docker .add { margin-top: 17px; }

.palette { width: 18px; flex: none; display: flex; flex-direction: column; }
.dots { width: 10px; height: 2px; margin: 4px 0 4px 3px; background: repeating-linear-gradient(90deg, #aaa 0 2px, transparent 2px 4px); flex: none; }
.palette > button { height: 16px; }
.palette > button svg { width: 9px; height: 10px; }
.palette > .pmenu { height: 12px; }
.palette > .pdrop svg { width: 14px; height: 14px; }
.swatches { flex: 0 1 488px; min-height: 0; overflow: hidden; display: flex; flex-direction: column; background: #55565a; padding: 1px 0 0 1px; }
.swatches button { width: 16px; height: 16px; margin-bottom: 1px; }
.swatches .current { outline: 1px solid #fff; }
.swatches svg { width: 16px; height: 16px; }

.status { display: flex; align-items: center; height: 34px; flex: none; border-top: 1px solid #d0d0d0; padding: 0 25px 0 5px; white-space: nowrap; }
.coords { width: 91px; }
.play { width: 14px; height: 14px; border: 1px solid #000; margin-right: auto; }
.play svg { width: 6px; height: 9px; }
.proof { width: 16px; height: 16px; margin-right: 12px; }
.bucket { width: 16px; height: 16px; margin-right: 7px; }
.sw { width: 17px; height: 17px; border: 1px solid #777; margin-right: 4px; }
.blue { background: #2e3192; }
.ink { background: #221f20; }
.fillval { width: 160px; }
.ssep { width: 1px; height: 22px; background: #d0d0d0; margin-right: 8px; }
.pen { width: 12px; height: 16px; margin-right: 7px; }
.outval { width: 149px; }
.edge { height: 2px; flex: none; background: #000; }
```
FILE: main.js
```js
const NS = "http://www.w3.org/2000/svg";
const QUARTER = 61.6;

function add(svg, name, attrs, text) {
  const el = document.createElementNS(NS, name);
  for (const key in attrs) el.setAttribute(key, attrs[key]);
  if (text) el.textContent = text;
  svg.appendChild(el);
}

// Label for a position counted in quarter inches
function label(q) {
  const n = Math.abs(q);
  const whole = Math.floor(n / 4);
  const part = ["", "1/4", "1/2", "3/4"][n % 4];
  if (!part) return String(whole);
  return whole ? whole + "  " + part : part;
}

function horizontal(svg, zero, last) {
  for (let i = -16; i <= last * 4 + 3; i++) {
    const x = Math.round(zero + i * QUARTER / 4) + 0.5;
    const len = i % 4 === 0 ? 5 : i % 2 === 0 ? 3 : 2;
    add(svg, "path", { class: "tick", d: `M${x} ${18 - len}v${len}` });
    if (i % 4 === 0 && i / 4 < last) add(svg, "text", { class: "rlabel", x: x - 1, y: 11 }, label(i / 4));
  }
  add(svg, "text", { class: "rlabel", x: zero + 997, y: 11 }, "inches");
  add(svg, "path", { class: "mark", d: `M${zero + 156}.5 2v16` });
}

function vertical(svg, zero) {
  const put = (y, text) => add(svg, "text", { class: "rlabel", transform: `translate(12 ${y}) rotate(-90)` }, text);
  for (let i = -5; i <= 26; i++) {
    const y = Math.round(zero - i * QUARTER / 4) + 0.5;
    const len = i % 4 === 0 ? 5 : i % 2 === 0 ? 3 : 2;
    add(svg, "path", { class: "tick", d: `M${18 - len} ${y}h${len}` });
    if (i % 4 === 0) put(y, label(i / 4));
  }
  put(zero + 92, "inches");
  add(svg, "path", { class: "mark", d: `M2 ${zero + 85}.5h16` });
}

horizontal(document.getElementById("hruler"), 259, 16);
vertical(document.getElementById("vruler"), 413);

const colors = ["#221f20", "#414042", "#58595b", "#6d6e71", "#808285", "#939598", "#a7a9ac", "#bcbec0",
  "#d1d3d4", "#e6e7e8", "#ffffff", "#2e3192", "#00aeef", "#00a651", "#fff200", "#ed1c24", "#ec008c",
  "#a54686", "#f58220", "#f9a9a9", "#7f6a64", "#c7c3e1", "#9893c9", "#6389c9", "#746bb5", "#8078a8",
  "#43618e", "#544c6e"];
const box = document.getElementById("swatches");
box.innerHTML = '<button aria-label="No color"><svg><use href="#none"/></svg></button>';
colors.forEach((color, i) => {
  const b = document.createElement("button");
  b.style.background = color;
  b.setAttribute("aria-label", color);
  if (i === 1) b.className = "current";
  box.appendChild(b);
});
```
